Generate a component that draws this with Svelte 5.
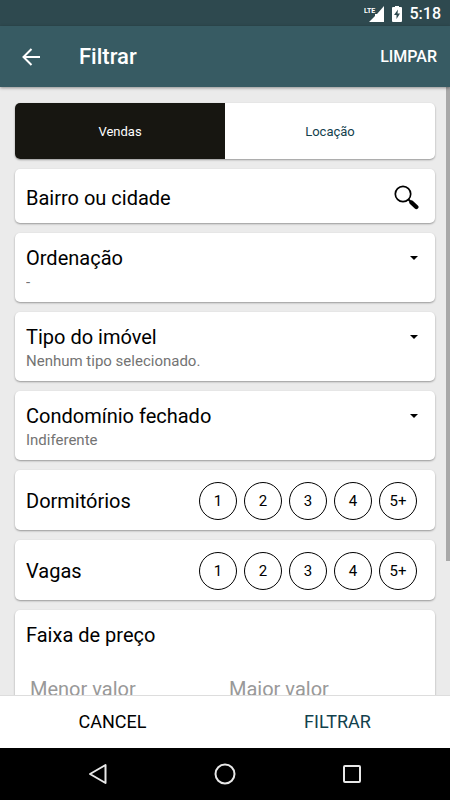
<script>
  let deal = $state('Vendas');
  let district = $state('');
  let minPrice = $state('');
  let maxPrice = $state('');

  const deals = ['Vendas', 'Locação'];
  const amounts = ['1', '2', '3', '4', '5+'];

  const choices = $state([
    { id: 'order', label: 'Ordenação', value: '-', options: ['-', 'Menor preço', 'Maior preço'] },
    { id: 'kind', label: 'Tipo do imóvel', value: 'Nenhum tipo selecionado.', options: ['Nenhum tipo selecionado.', 'Apartamento', 'Casa'] },
    { id: 'gated', label: 'Condomínio fechado', value: 'Indiferente', options: ['Indiferente', 'Sim', 'Não'] }
  ]);

  const counters = $state([
    { label: 'Dormitórios', value: null },
    { label: 'Vagas', value: null }
  ]);

  function pick(counter, amount) {
    counter.value = counter.value === amount ? null : amount;
  }

  function clearAll() {
    district = '';
    minPrice = '';
    maxPrice = '';
    for (const choice of choices) choice.value = choice.options[0];
    for (const counter of counters) counter.value = null;
  }
</script>

<div class="screen">
  <div class="status">
    <svg width="20" height="16" viewBox="0 0 20 16" aria-hidden="true">
      <path d="M20 0v16H5l6-6V8h2z" fill="#fff" />
      <text x="0" y="7" class="lte">LTE</text>
    </svg>
    <svg class="battery" width="10" height="16" viewBox="0 0 10 16" aria-hidden="true">
      <path d="M3 0h4v1h2q1 0 1 1v13q0 1-1 1H1q-1 0-1-1V2q0-1 1-1h2z" fill="#fff" />
      <path d="M6 3.500L2 9h2.500v4L8 7.500H5.500z" fill="#2e494f" />
    </svg>
    <span>5:18</span>
  </div>

  <header>
    <button class="back" aria-label="Voltar">
      <svg width="18" height="18" viewBox="0 0 18 18" fill="none" stroke="#fff" stroke-width="2" aria-hidden="true">
        <path d="M18 9H2M9.500 1L1.500 9l8 8" />
      </svg>
    </button>
    <h1>Filtrar</h1>
    <button class="clear" onclick={clearAll}>LIMPAR</button>
  </header>

  <div class="body">
    <main>
      <div class="card deals">
        {#each deals as name}
          <button class:active={deal === name} aria-pressed={deal === name} onclick={() => (deal = name)}>{name}</button>
        {/each}
      </div>

      <div class="card search">
        <input type="text" aria-label="Bairro ou cidade" placeholder="Bairro ou cidade" bind:value={district} />
        <button aria-label="Buscar">
          <svg width="25" height="25" viewBox="0 0 25 25" fill="none" stroke="#000" aria-hidden="true">
            <circle cx="9" cy="9" r="7.700" stroke-width="1.700" />
            <path d="M14.500 14.500l3 3" stroke-width="2" />
            <path d="M17.500 17.500l4.800 4.500" stroke-width="4.400" stroke-linecap="round" />
          </svg>
        </button>
      </div>

      {#each choices as choice}
        <div class="card choice">
          <div class="choice-head">
            <label for={choice.id}>{choice.label}</label>
            <svg width="8" height="4" viewBox="0 0 8 4" aria-hidden="true"><path d="M0 0h8L4 4z" /></svg>
          </div>
          <select id={choice.id} bind:value={choice.value}>
            {#each choice.options as option}
              <option>{option}</option>
            {/each}
          </select>
        </div>
      {/each}

      {#each counters as counter}
        <div class="card counter">
          <h2>{counter.label}</h2>
          <div class="amounts" role="group" aria-label={counter.label}>
            {#each amounts as amount}
              <button class:active={counter.value === amount} aria-pressed={counter.value === amount} onclick={() => pick(counter, amount)}>{amount}</button>
            {/each}
          </div>
        </div>
      {/each}

      <div class="card price">
        <h2>Faixa de preço</h2>
        <div class="range">
          <input type="text" inputmode="numeric" aria-label="Menor valor" placeholder="Menor valor" bind:value={minPrice} />
          <input type="text" inputmode="numeric" aria-label="Maior valor" placeholder="Maior valor" bind:value={maxPrice} />
        </div>
      </div>
    </main>
    <div class="thumb"></div>
  </div>

  <footer>
    <button>CANCEL</button>
    <button class="apply">FILTRAR</button>
  </footer>

  <nav aria-label="Sistema">
    <button aria-label="Voltar">
      <svg width="20" height="22" viewBox="0 0 20 22"><path d="M17.500 2v18L2 11z" /></svg>
    </button>
    <button aria-label="Início">
      <svg width="22" height="22" viewBox="0 0 22 22"><circle cx="11" cy="11" r="9.500" /></svg>
    </button>
    <button aria-label="Recentes">
      <svg width="20" height="20" viewBox="0 0 20 20"><rect x="2" y="2" width="16" height="16" rx="1" /></svg>
    </button>
  </nav>
</div>

<style>
  .screen {
    display: flex;
    flex-direction: column;
    height: 100vh;
    overflow: hidden;
    background: #ebebeb;
    color: #000;
    font-family: Roboto, "Liberation Sans", sans-serif;
    font-size: 20px;
    line-height: 24px;
  }

  .screen * {
    box-sizing: border-box;
  }

  button,
  input,
  select {
    margin: 0;
    padding: 0;
    border: 0;
    border-radius: 0;
    background: none;
    color: inherit;
    font: inherit;
  }

  button {
    cursor: pointer;
  }

  h1,
  h2 {
    margin: 0;
    font-size: 20px;
    font-weight: 400;
  }

  svg {
    display: block;
    flex: none;
  }

  .status {
    display: flex;
    flex: none;
    align-items: center;
    justify-content: flex-end;
    height: 26px;
    padding: 1px 9px 0 0;
    background: #2e494f;
    color: #fff;
    font-size: 16px;
    font-weight: 500;
  }

  .lte {
    fill: #fff;
    font-size: 7px;
    font-weight: 700;
  }

  .battery {
    margin: 0 8px;
  }

  header {
    position: relative;
    z-index: 1;
    display: flex;
    flex: none;
    align-items: center;
    height: 61px;
    padding: 1px 13px 0 22px;
    background: #375b63;
    box-shadow: 0 1px 3px rgba(0, 0, 0, 0.4);
    color: #fff;
  }

  h1 {
    flex: 1;
    padding-left: 39px;
    font-size: 22px;
    font-weight: 500;
  }

  .clear {
    font-size: 16px;
    font-weight: 500;
  }

  .body {
    position: relative;
    flex: 1;
    min-height: 0;
  }

  main {
    display: flex;
    flex-direction: column;
    gap: 10px;
    height: 100%;
    padding: 16px 15px;
    overflow-y: auto;
    scrollbar-width: none;
  }

  .thumb {
    position: absolute;
    top: 0;
    right: 0;
    width: 4px;
    height: 78%;
    background: #a8a8a8;
  }

  .card {
    flex: none;
    border-radius: 5px;
    background: #fff;
    box-shadow: 0 1px 2px rgba(0, 0, 0, 0.36);
  }

  .deals {
    display: flex;
    height: 56px;
    overflow: hidden;
  }

  .deals button {
    flex: 1;
    padding-top: 1px;
    color: #12414d;
    font-size: 13px;
  }

  .deals .active {
    background: #171611;
    color: #fff;
  }

  .search {
    display: flex;
    align-items: center;
    height: 54px;
    padding: 2px 16px 0 11px;
  }

  .search input {
    flex: 1;
    min-width: 0;
    height: 32px;
    padding-top: 2px;
  }

  .search input::placeholder {
    color: #000;
    opacity: 1;
  }

  .choice {
    height: 69px;
    padding: 13px 17px 0 11px;
  }

  .choice-head {
    display: flex;
    align-items: center;
    justify-content: space-between;
  }

  .choice select {
    display: block;
    width: 100%;
    height: 24px;
    appearance: none;
    color: #737373;
    font-size: 15px;
    line-height: 24px;
  }

  .counter {
    display: flex;
    align-items: center;
    justify-content: space-between;
    height: 60px;
    padding: 1px 18px 0 11px;
  }

  .amounts {
    display: flex;
    gap: 7px;
  }

  .amounts button {
    width: 38px;
    height: 38px;
    border: 1px solid #000;
    border-radius: 50%;
    font-size: 15px;
  }

  .amounts .active {
    background: #171611;
    color: #fff;
  }

  .price {
    padding: 13px 11px 16px;
  }

  .range {
    display: flex;
    padding-top: 24px;
  }

  .range input {
    flex: 1;
    min-width: 0;
    height: 36px;
    padding: 0 4px;
  }

  .range input::placeholder {
    color: #999;
    opacity: 1;
  }

  footer {
    display: flex;
    flex: none;
    height: 53px;
    border-top: 1px solid #ddd;
    background: #fff;
    font-size: 18px;
  }

  footer button {
    flex: 1;
  }

  .apply {
    color: #12414d;
  }

  nav {
    display: flex;
    flex: none;
    align-items: center;
    justify-content: center;
    gap: 63px;
    height: 52px;
    background: #000;
  }

  nav button {
    display: flex;
    align-items: center;
    justify-content: center;
    width: 64px;
    height: 52px;
  }

  nav svg {
    fill: none;
    stroke: #e8e8e8;
    stroke-width: 2;
    stroke-linejoin: round;
  }
</style>
